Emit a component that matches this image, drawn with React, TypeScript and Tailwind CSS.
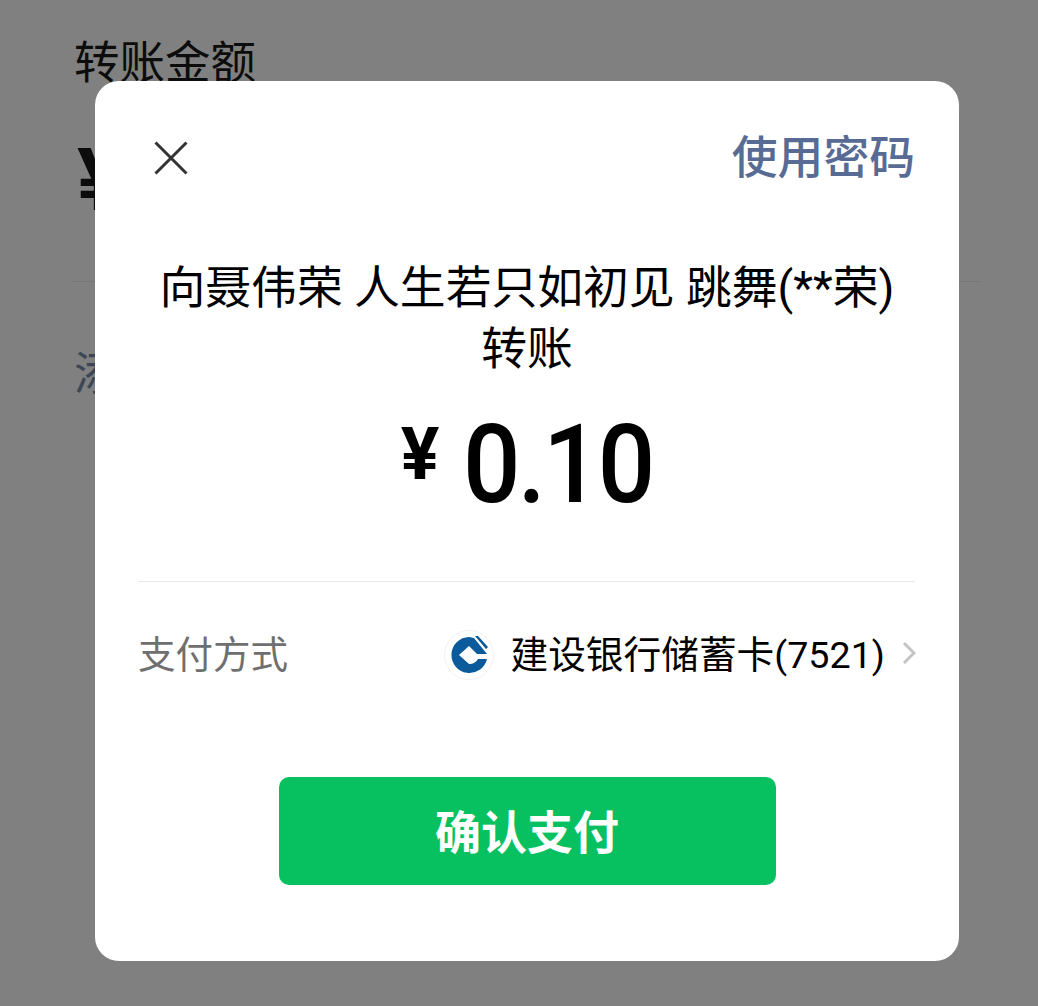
const cjk = "font-['Roboto','Noto_Sans_CJK_SC',sans-serif]";

export default function App() {
  return (
    <div className={`relative w-[1038px] h-[1006px] overflow-hidden bg-[#808080] ${cjk}`}>
      <div className="flex flex-col pl-[72px] pr-[58px] pt-[36px]">
        <div className="pl-[2px] text-[45.5px] leading-[56px] text-[#0c0c0c]">转账金额</div>
        <div className="pl-[5px] mt-[45px] h-[144px] text-[87px] leading-[87px] font-bold text-[#0c0c0c]">¥</div>
        <div className="h-px bg-[#777777]" />
        <div className="pl-[2px] mt-[65px] text-[45.5px] leading-[56px] text-[#3e4656]">添加转账说明</div>
      </div>

      <div className="absolute left-[95px] top-[81px] w-[864px] h-[880px] rounded-[24px] bg-white flex flex-col px-[44px]">
        <div className="flex items-center justify-between h-[52px] mt-[51px]">
          <svg width="34" height="34" viewBox="0 0 34 34" className="ml-[15px]">
            <path d="M1.5 1.5 L32.5 32.5 M32.5 1.5 L1.5 32.5" stroke="#333333" strokeWidth="3" fill="none" />
          </svg>
          <span className="text-[45.8px] leading-[52px] font-medium text-[#576b95] translate-y-[1px]">使用密码</span>
        </div>

        <div className="mt-[74px] text-center text-[45.8px] leading-[61px] text-black">
          <div className="whitespace-nowrap">向聂伟荣 人生若只如初见 跳舞(**荣)</div>
          <div>转账</div>
        </div>

        <div className="flex items-center justify-center mt-[30px] h-[110px] text-black">
          <span className="text-[72px] leading-[72px] font-bold mr-[24px] -mt-[21px]">¥</span>
          <span className="inline-block origin-left scale-x-[0.92] -mr-[16px] text-[110px] leading-[110px] font-medium tracking-[-3px]">0.10</span>
        </div>

        <div className="h-px bg-[#e8e8e8] mt-[61px]" />

        <div className="flex items-center justify-between mt-[47px] h-[52px]">
          <span className="-ml-[1px] text-[37.5px] leading-[52px] text-[#6f6f6f]">支付方式</span>
          <div className="flex items-center">
            <div className="w-[50px] h-[50px] rounded-full border border-[#f2f2f2] flex items-center justify-center">
              <svg width="38" height="38" viewBox="0 0 38 38">
                <path d="M19 1 A18 18 0 1 0 37 23 L28 23 A10 10 0 0 1 19 28 L9 19 L19 10 L27 18 L37 18 L24 2 Z" fill="#0a5a9c" />
                <path d="M25 0 L28 0 L38 11 L36 13 Z" fill="#0a5a9c" />
              </svg>
            </div>
            <span className="ml-[16px] text-[37.7px] leading-[52px] text-black whitespace-nowrap">建设银行储蓄卡(7521)</span>
            <svg width="14" height="24" viewBox="0 0 14 24" className="ml-[17px] mr-[-1px] -translate-y-[2px]">
              <path d="M2 2 L12 12 L2 22" stroke="#c4c4c4" strokeWidth="3" fill="none" />
            </svg>
          </div>
        </div>

        <div className="self-center mt-[96px] w-[497px] h-[108px] rounded-[10px] bg-[#07c160] flex items-center justify-center text-[46px] font-bold text-white">
          <span className="translate-y-[2px]">确认支付</span>
        </div>
      </div>
    </div>
  );
}
